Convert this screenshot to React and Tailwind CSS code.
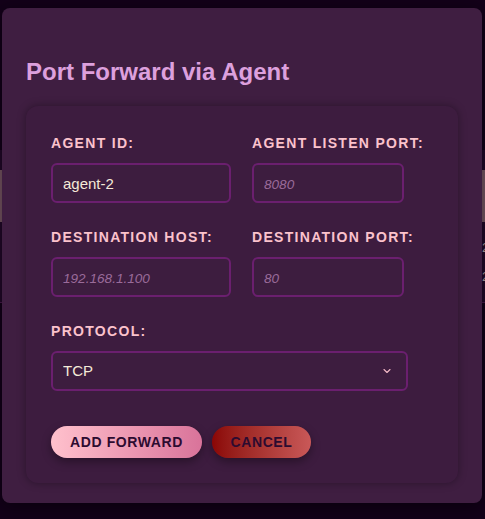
import { ChevronDown } from 'lucide-react';

const labelCls =
  "block text-[14px] font-bold uppercase tracking-[1.3px] leading-[20px] text-[#fbc2cc] mb-[10px]";
const inputCls =
  "h-[40px] rounded-[6px] border-2 border-[#6b1f6f] bg-[#3d1d3f] px-[10px] text-[15px] text-[#f5ead8] outline-none placeholder:italic placeholder:text-[13.6px] placeholder:text-[#9a6b9a]";

function Field({ label, width, value, placeholder }) {
  return (
    <div>
      <label className={labelCls}>{label}</label>
      <input
        className={inputCls}
        style={{ width }}
        defaultValue={value}
        placeholder={placeholder}
      />
    </div>
  );
}

export default function App() {
  return (
    <div
      className="relative h-[519px] w-[485px] overflow-hidden bg-[#130019]"
      style={{ fontFamily: '"Liberation Sans", Arial, sans-serif' }}
    >
      {/* page behind the overlay */}
      <div className="flex flex-col pt-[150px]">
        <div className="h-[20px] bg-[#22082a]" />
        <div className="h-[52px] bg-[#7a5866]" />
        <div className="flex h-[80px] flex-col justify-center gap-[10px] bg-[#22082a] pl-[482px] text-[13px] text-[#b8a8a8]">
          <span>2</span>
          <span>2</span>
        </div>
        <div className="h-[1px] bg-[#4a1a4e]" />
      </div>

      {/* modal */}
      <div className="absolute left-[2px] top-[8px] w-[480px] h-[495px] rounded-[8px] bg-[#3f1e41] px-[24px] pt-[48px] shadow-[0_4px_20px_rgba(0,0,0,0.5)]">
        <h2 className="text-[24px] font-bold leading-[32px] text-[#dda0dd]">
          Port Forward via Agent
        </h2>

        <div className="mt-[18px] h-[377px] rounded-[12px] bg-[#3d1c3f] pl-[25px] pt-[27px] shadow-[0_0_8px_rgba(0,0,0,0.35)]">
          <div className="flex gap-[21px]">
            <Field label="Agent ID:" width={180} value="agent-2" />
            <Field label="Agent Listen Port:" width={152} placeholder="8080" />
          </div>
          <div className="mt-[24px] flex gap-[21px]">
            <Field label="Destination Host:" width={180} placeholder="192.168.1.100" />
            <Field label="Destination Port:" width={152} placeholder="80" />
          </div>
          <div className="mt-[24px]">
            <label className={labelCls}>Protocol:</label>
            <div className="relative w-[357px]">
              <select className="h-[40px] w-full appearance-none rounded-[6px] border-2 border-[#6b1f6f] bg-[#3d1d3f] px-[10px] text-[15px] text-[#f5ead8] outline-none">
                <option>TCP</option>
                <option>UDP</option>
              </select>
              <ChevronDown
                className="pointer-events-none absolute right-[15px] top-[14px] text-[#f2b8c6]"
                size={12}
                strokeWidth={2.2}
              />
            </div>
          </div>
          <div className="mt-[35px] flex gap-[10px]">
            <button className="h-[32px] w-[151px] rounded-full bg-gradient-to-r from-[#ffc1cd] to-[#d9739a] text-[14px] font-bold uppercase tracking-[0.6px] text-[#2d0b30] shadow-[0_4px_10px_rgba(0,0,0,0.35)]">
              Add Forward
            </button>
            <button className="h-[32px] w-[99px] rounded-full bg-gradient-to-r from-[#8b0505] to-[#c95858] text-[14px] font-bold uppercase tracking-[0.6px] text-[#2d0b30] shadow-[0_4px_10px_rgba(0,0,0,0.35)]">
              Cancel
            </button>
          </div>
        </div>
      </div>
    </div>
  );
}
